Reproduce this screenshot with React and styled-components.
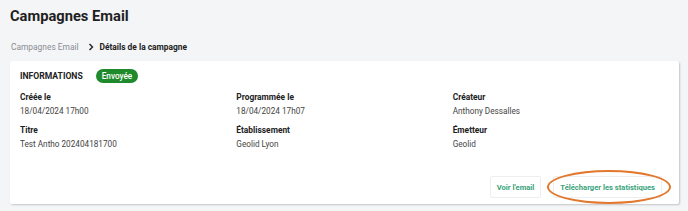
import React from 'react'
import styled, { createGlobalStyle } from 'styled-components'

const GlobalStyle = createGlobalStyle`
  html, body {
    margin: 0;
    padding: 0;
    background: #f4f5f7;
    font-family: Roboto, "Liberation Sans", sans-serif;
    color: #222;
  }
  * { box-sizing: border-box; }
`

const Page = styled.div`
  padding: 7px 10px 8px 10px;
  width: 688px;
  height: 211px;
`

const PageTitle = styled.h1`
  margin: 0;
  font-size: 14.7px;
  font-weight: 700;
  line-height: 18px;
  color: #1f1f1f;
`

const Breadcrumb = styled.nav`
  display: flex;
  align-items: center;
  gap: 6px;
  margin-top: 15px;
  font-size: 8.4px;
  line-height: 14px;
  padding-left: 1px;
`

const Crumb = styled.span`
  color: ${(p) => (p.current ? '#222' : '#8a8d93')};
  font-weight: ${(p) => (p.current ? 700 : 400)};
`

const Chevron = styled.svg`
  margin-left: 3px;
`

const Card = styled.section`
  margin-top: 7px;
  background: #fff;
  border-radius: 2px;
  box-shadow: 1px 1px 2px rgba(0, 0, 0, 0.2);
  padding: 8px 10px 6px 10px;
  width: 669px;
`

const CardHeader = styled.div`
  display: flex;
  align-items: center;
  gap: 13px;
  height: 14px;
`

const SectionTitle = styled.span`
  font-size: 8.6px;
  font-weight: 700;
  text-transform: uppercase;
  color: #222;
`

const Badge = styled.span`
  display: inline-flex;
  align-items: center;
  height: 14px;
  padding: 0 6px;
  border-radius: 7px;
  background: #1f8a2c;
  color: #fff;
  font-size: 8.2px;
  font-weight: 500;
`

const Grid = styled.div`
  display: grid;
  grid-template-columns: repeat(3, 1fr);
  row-gap: 7px;
  margin-top: 8px;
`

const Field = styled.div`
  display: flex;
  flex-direction: column;
  gap: 2px;
`

const Label = styled.span`
  font-size: 8.4px;
  font-weight: 700;
  line-height: 12px;
  color: #222;
`

const Value = styled.span`
  font-size: 8.2px;
  line-height: 12px;
  color: #444;
`

const Actions = styled.div`
  display: flex;
  justify-content: flex-end;
  gap: 12px;
  margin-top: 26px;
  padding-right: 7px;
`

const Button = styled.button`
  position: relative;
  height: 22px;
  padding: 0 6px;
  border: 1px solid #eceef0;
  background: #fff;
  border-radius: 2px;
  color: #3aa37a;
  font-family: inherit;
  font-size: 7.6px;
  font-weight: 700;
  cursor: pointer;
`

const Highlight = styled.span`
  position: absolute;
  left: -7px;
  right: -10px;
  top: -7px;
  bottom: -7px;
  border: 2px solid #e2782e;
  border-radius: 50%;
  pointer-events: none;
`

const fields = [
  { label: 'Créée le', value: '18/04/2024 17h00' },
  { label: 'Programmée le', value: '18/04/2024 17h07' },
  { label: 'Créateur', value: 'Anthony Dessalles' },
  { label: 'Titre', value: 'Test Antho 202404181700' },
  { label: 'Établissement', value: 'Geolid Lyon' },
  { label: 'Émetteur', value: 'Geolid' },
]

export default function App() {
  return (
    <>
      <GlobalStyle />
      <Page>
        <PageTitle>Campagnes Email</PageTitle>
        <Breadcrumb>
          <Crumb>Campagnes Email</Crumb>
          <Chevron width="6" height="8" viewBox="0 0 6 8">
            <path d="M1.5 1 L4.5 4 L1.5 7" fill="none" stroke="#222" strokeWidth="1.4" />
          </Chevron>
          <Crumb current>Détails de la campagne</Crumb>
        </Breadcrumb>
        <Card>
          <CardHeader>
            <SectionTitle>Informations</SectionTitle>
            <Badge>Envoyée</Badge>
          </CardHeader>
          <Grid>
            {fields.map((f) => (
              <Field key={f.label}>
                <Label>{f.label}</Label>
                <Value>{f.value}</Value>
              </Field>
            ))}
          </Grid>
          <Actions>
            <Button>Voir l'email</Button>
            <Button>
              Télécharger les statistiques
              <Highlight />
            </Button>
          </Actions>
        </Card>
      </Page>
    </>
  )
}
